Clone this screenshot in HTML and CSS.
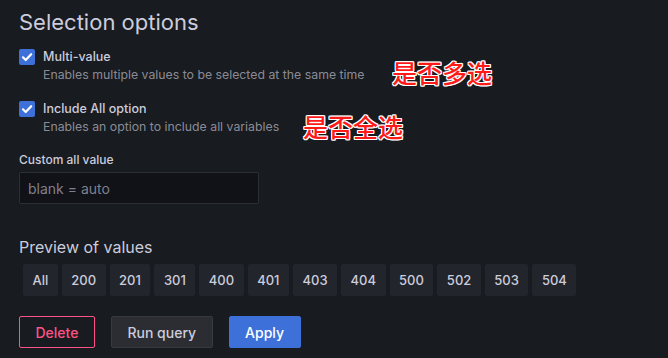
FILE: index.html
```html
<!DOCTYPE html>
<html lang="en">
<head>
    <meta charset="UTF-8">
    <meta name="viewport" content="width=device-width, initial-scale=1.0">
    <title>Selection options</title>
    <link rel="stylesheet" href="styles.css">
</head>
<body>

<div class="editor">
    <h3 class="section-title">Selection options</h3>

    <!-- Checkbox options -->
    <div class="option">
        <span class="checkbox">
            <svg viewBox="0 0 16 16" width="16" height="16"><path d="M4 8.3l2.7 2.7L12.2 5.2" fill="none" stroke="#fff" stroke-width="2.2" stroke-linecap="round" stroke-linejoin="round"/></svg>
        </span>
        <div class="option-text">
            <div class="option-label">Multi-value</div>
            <div class="option-desc">Enables multiple values to be selected at the same time</div>
        </div>
        <span class="note note-multi">是否多选</span>
    </div>

    <div class="option">
        <span class="checkbox">
            <svg viewBox="0 0 16 16" width="16" height="16"><path d="M4 8.3l2.7 2.7L12.2 5.2" fill="none" stroke="#fff" stroke-width="2.2" stroke-linecap="round" stroke-linejoin="round"/></svg>
        </span>
        <div class="option-text">
            <div class="option-label">Include All option</div>
            <div class="option-desc">Enables an option to include all variables</div>
        </div>
        <span class="note note-all">是否全选</span>
    </div>

    <!-- Custom all value -->
    <div class="field">
        <label class="field-label">Custom all value</label>
        <input class="input" type="text" placeholder="blank = auto">
    </div>

    <!-- Preview -->
    <h4 class="preview-title">Preview of values</h4>
    <div class="chips">
        <span class="chip">All</span>
        <span class="chip">200</span>
        <span class="chip">201</span>
        <span class="chip">301</span>
        <span class="chip">400</span>
        <span class="chip">401</span>
        <span class="chip">403</span>
        <span class="chip">404</span>
        <span class="chip">500</span>
        <span class="chip">502</span>
        <span class="chip">503</span>
        <span class="chip">504</span>
    </div>

    <div class="actions">
        <button class="btn btn-delete">Delete</button>
        <button class="btn btn-secondary">Run query</button>
        <button class="btn btn-primary">Apply</button>
    </div>
</div>

</body>
</html>
```

FILE: styles.css
```css
body {
    margin: 0;
    background-color: #181b1f;
    font-family: Inter, "Noto Sans", sans-serif;
    color: #ccccdc;
}
.editor {
    padding: 8px 19px 0;
}
.section-title {
    margin: 0 0 12px;
    font-size: 22px;
    font-weight: 400;
    line-height: 28px;
}
.option {
    position: relative;
    display: flex;
    gap: 8px;
    margin-bottom: 16px;
}
.checkbox {
    width: 16px;
    height: 16px;
    margin-top: 1px;
    border-radius: 2px;
    background-color: #3d71d9;
    flex-shrink: 0;
}
.checkbox svg {
    display: block;
}
.option-label {
    font-size: 12.5px;
    font-weight: 500;
    line-height: 18px;
}
.option-desc {
    font-size: 12.3px;
    line-height: 18px;
    color: rgba(204, 204, 220, 0.65);
}
.note {
    position: absolute;
    font-family: "Noto Sans CJK SC", sans-serif;
    font-size: 25px;
    font-weight: 500;
    line-height: 26px;
    color: #ff1a1a;
    text-shadow: 1px 0 #fff, -1px 0 #fff, 0 1px #fff, 0 -1px #fff,
                 1px 1px #fff, -1px -1px #fff, 1px -1px #fff, -1px 1px #fff;
}
.note-multi {
    left: 373px;
    top: 11px;
}
.note-all {
    left: 284px;
    top: 13px;
}
.field {
    margin-top: 16px;
}
.field-label {
    display: block;
    font-size: 12px;
    font-weight: 500;
    line-height: 16px;
    margin-bottom: 4px;
}
.input {
    box-sizing: border-box;
    width: 240px;
    height: 32px;
    padding: 0 8px;
    background-color: #111217;
    border: 1px solid #2d2f36;
    border-radius: 2px;
    color: #ccccdc;
    font-family: inherit;
    font-size: 14px;
}
.input::placeholder {
    color: rgba(204, 204, 220, 0.6);
}
.preview-title {
    margin: 32px 0 6px;
    font-size: 16px;
    font-weight: 400;
    line-height: 22px;
}
.chips {
    display: flex;
    gap: 4px;
    padding-left: 4px;
}
.chip {
    height: 32px;
    line-height: 32px;
    padding: 0 9.5px;
    background-color: #22252b;
    border-radius: 2px;
    font-size: 13px;
    font-weight: 500;
}
.actions {
    display: flex;
    gap: 16px;
    margin-top: 20px;
}
.btn {
    box-sizing: border-box;
    height: 32px;
    padding: 0 15.5px;
    border-radius: 2px;
    font-family: inherit;
    font-size: 14px;
    font-weight: 500;
    cursor: pointer;
}
.btn-delete {
    background: transparent;
    border: 1px solid #ff5286;
    color: #ff5286;
}
.btn-secondary {
    background-color: #2b2d33;
    border: 1px solid #383a41;
    color: #ccccdc;
}
.btn-primary {
    background-color: #3d71d9;
    border: 1px solid #3d71d9;
    color: #fff;
}
```
